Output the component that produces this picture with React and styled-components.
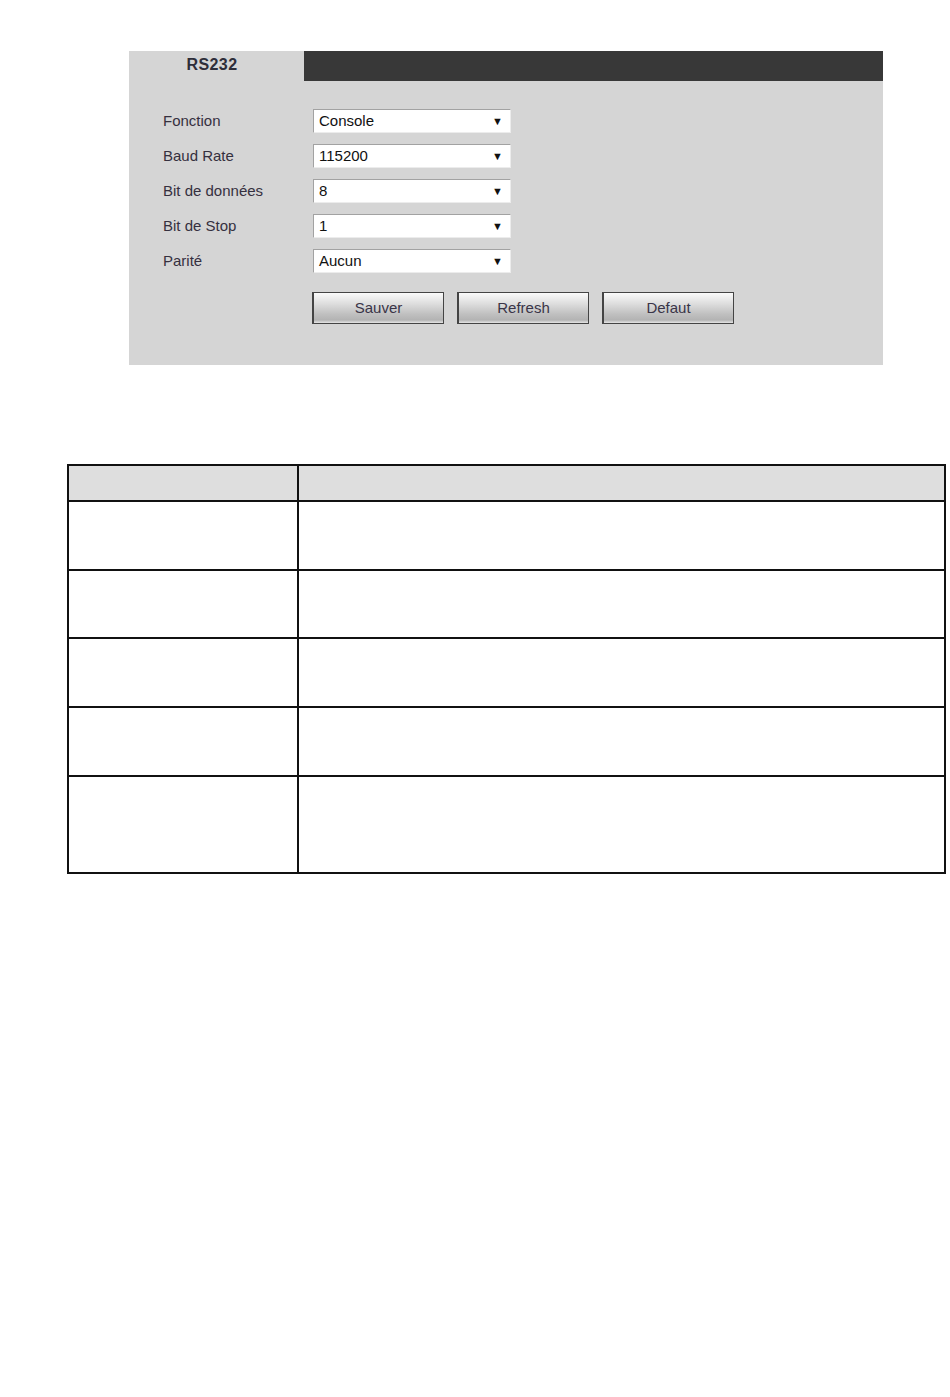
import React from "react";
import styled, { createGlobalStyle } from "styled-components";

const Global = createGlobalStyle`
  html, body { margin: 0; padding: 0; background: #fff; }
  body { font-family: "Liberation Sans", Arial, sans-serif; }
`;

const Page = styled.div`
  width: 950px;
  min-height: 1397px;
  padding-top: 51px;
  box-sizing: border-box;
`;

const Panel = styled.section`
  margin-left: 129px;
  width: 754px;
  height: 314px;
  background: #d5d5d5;
  display: flex;
  flex-direction: column;
`;

const TabBar = styled.div`
  display: flex;
  height: 30px;
`;

const Tab = styled.div`
  width: 175px;
  display: flex;
  justify-content: center;
  align-items: center;
  padding: 0 9px 3px 0;
  box-sizing: border-box;
  font-weight: bold;
  font-size: 16px;
  letter-spacing: 0.4px;
  color: #2e2e3a;
`;

const DarkBar = styled.div`
  flex: 1;
  background: #383838;
`;

const Form = styled.div`
  padding: 28px 0 0 34px;
  display: flex;
  flex-direction: column;
  gap: 11px;
`;

const Row = styled.div`
  display: flex;
  align-items: center;
  height: 24px;
`;

const Label = styled.div`
  width: 150px;
  font-size: 15px;
  color: #35303f;
  padding-bottom: 1px;
`;

const Select = styled.div`
  width: 198px;
  height: 24px;
  box-sizing: border-box;
  background: #fff;
  border-top: 1px solid #a2a2a2;
  border-left: 1px solid #a2a2a2;
  border-right: 1px solid #ececec;
  border-bottom: 1px solid #ececec;
  display: flex;
  align-items: center;
  justify-content: space-between;
  padding: 0 7px 1px 5px;
  font-size: 15px;
  color: #111;
`;

const Arrow = styled.span`
  font-size: 11px;
  color: #111;
`;

const Buttons = styled.div`
  display: flex;
  gap: 13px;
  margin-top: 8px;
  padding-left: 149px;
`;

const Button = styled.div`
  width: 132px;
  height: 32px;
  box-sizing: border-box;
  border: 1px solid #444;
  border-left: 2px solid #444;
  background: linear-gradient(#fafafa 0%, #dedede 35%, #c0c0c0 70%, #b3b3b3 90%, #e6e6e6 100%);
  display: flex;
  align-items: center;
  justify-content: center;
  padding-bottom: 1px;
  font-size: 15px;
  color: #3a3548;
`;

const Table = styled.table`
  margin: 99px 0 0 67px;
  width: 879px;
  border-collapse: collapse;
`;

const Th = styled.th`
  border: 2px solid #111;
  background: #dedede;
  height: 34px;
  padding: 0;
  width: ${(p) => p.$w || "auto"};
`;

const Td = styled.td`
  border: 2px solid #111;
  height: ${(p) => p.$h}px;
  padding: 0;
  border-left-color: ${(p) => (p.$right ? "#555" : "#111")};
`;

const fields = [
  ["Fonction", "Console"],
  ["Baud Rate", "115200"],
  ["Bit de données", "8"],
  ["Bit de Stop", "1"],
  ["Parité", "Aucun"],
];

const rowHeights = [67, 66, 67, 67, 95];

export default function App() {
  return (
    <Page>
      <Global />
      <Panel>
        <TabBar>
          <Tab>RS232</Tab>
          <DarkBar />
        </TabBar>
        <Form>
          {fields.map(([l, v]) => (
            <Row key={l}>
              <Label>{l}</Label>
              <Select>
                <span>{v}</span>
                <Arrow>▼</Arrow>
              </Select>
            </Row>
          ))}
          <Buttons>
            <Button>Sauver</Button>
            <Button>Refresh</Button>
            <Button>Defaut</Button>
          </Buttons>
        </Form>
      </Panel>
      <Table>
        <thead>
          <tr>
            <Th $w="228px"></Th>
            <Th></Th>
          </tr>
        </thead>
        <tbody>
          {rowHeights.map((h, i) => (
            <tr key={i}>
              <Td $h={h}></Td>
              <Td $h={h} $right></Td>
            </tr>
          ))}
        </tbody>
      </Table>
    </Page>
  );
}
